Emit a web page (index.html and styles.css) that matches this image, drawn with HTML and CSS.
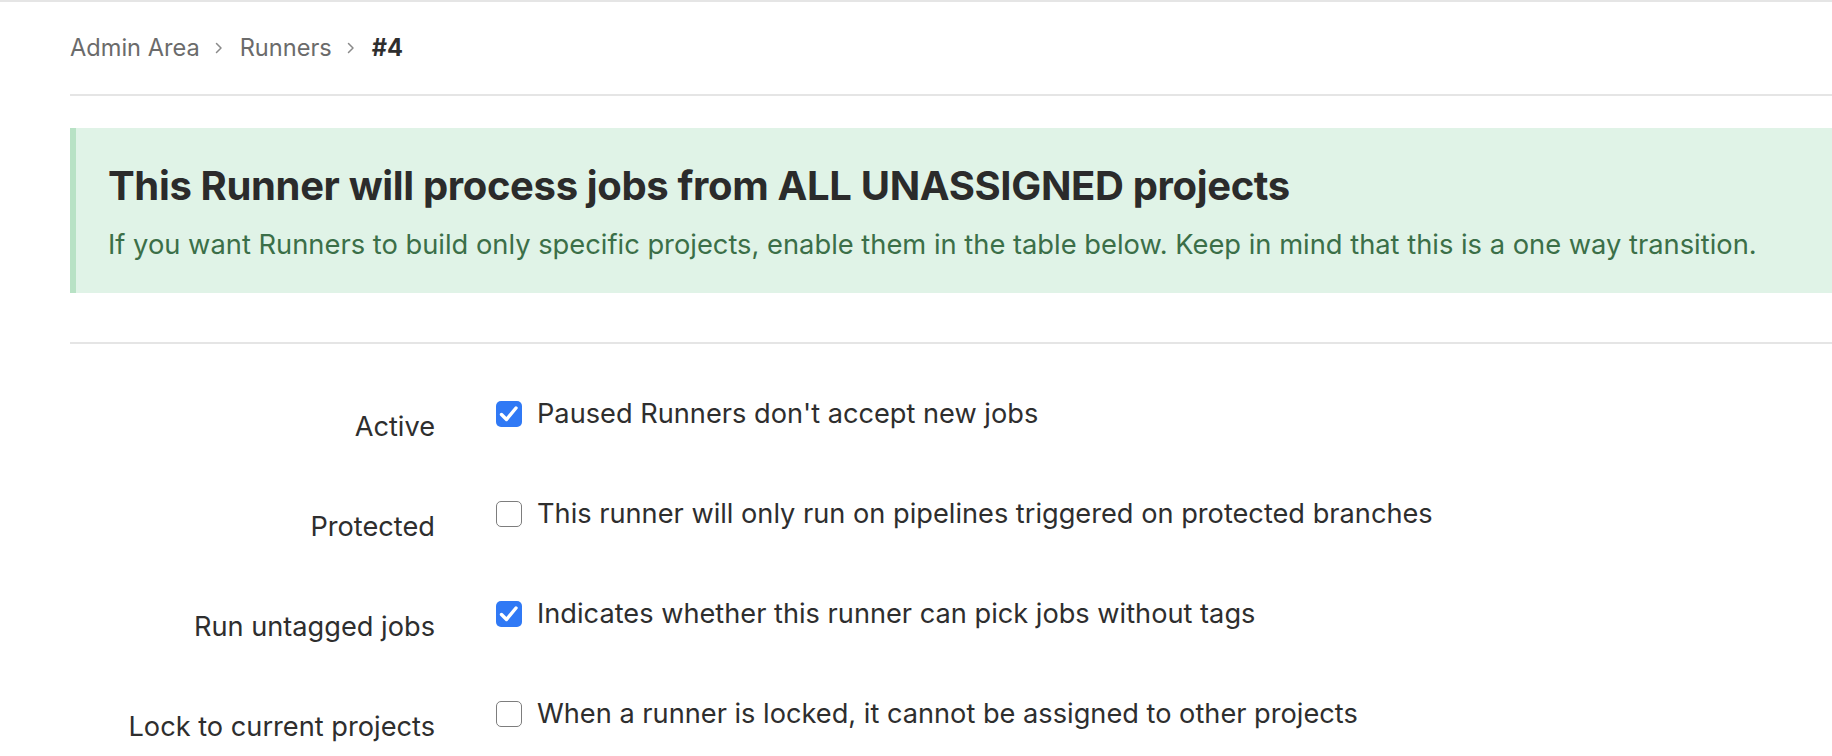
FILE: index.html
```html
<!DOCTYPE html>
<html>
<head>
<meta charset="utf-8">
<link rel="stylesheet" href="styles.css">
</head>
<body>
<div class="topbar"></div>
<main class="content">
  <nav class="breadcrumbs">
    <a class="crumb">Admin Area</a>
    <svg class="chev" width="8" height="12" viewBox="0 0 8 12"><path d="M1.5 1.5 L6 6 L1.5 10.5" fill="none" stroke="#8a8a8a" stroke-width="1.5" stroke-linecap="round" stroke-linejoin="round"/></svg>
    <a class="crumb">Runners</a>
    <svg class="chev" width="8" height="12" viewBox="0 0 8 12"><path d="M1.5 1.5 L6 6 L1.5 10.5" fill="none" stroke="#8a8a8a" stroke-width="1.5" stroke-linecap="round" stroke-linejoin="round"/></svg>
    <strong class="crumb current">#4</strong>
  </nav>

  <div class="alert">
    <h4 class="alert-title">This Runner will process jobs from ALL UNASSIGNED projects</h4>
    <p class="alert-text">If you want Runners to build only specific projects, enable them in the table below. Keep in mind that this is a one way transition.</p>
  </div>

  <hr class="divider">

  <form class="settings">
    <div class="row">
      <label class="row-label">Active</label>
      <div class="control">
        <span class="box checked"><svg width="26" height="26" viewBox="0 0 26 26"><path d="M5.5 13.5 L10.5 18.5 L20 7" fill="none" stroke="#fff" stroke-width="3.4" stroke-linecap="round" stroke-linejoin="round"/></svg></span>
        <span class="control-text">Paused Runners don't accept new jobs</span>
      </div>
    </div>
    <div class="row">
      <label class="row-label">Protected</label>
      <div class="control">
        <span class="box"></span>
        <span class="control-text">This runner will only run on pipelines triggered on protected branches</span>
      </div>
    </div>
    <div class="row">
      <label class="row-label">Run untagged jobs</label>
      <div class="control">
        <span class="box checked"><svg width="26" height="26" viewBox="0 0 26 26"><path d="M5.5 13.5 L10.5 18.5 L20 7" fill="none" stroke="#fff" stroke-width="3.4" stroke-linecap="round" stroke-linejoin="round"/></svg></span>
        <span class="control-text">Indicates whether this runner can pick jobs without tags</span>
      </div>
    </div>
    <div class="row">
      <label class="row-label">Lock to current projects</label>
      <div class="control">
        <span class="box"></span>
        <span class="control-text">When a runner is locked, it cannot be assigned to other projects</span>
      </div>
    </div>
  </form>
</main>
</body>
</html>
```
FILE: styles.css
```css
html, body {
  margin: 0;
  padding: 0;
  background: #fff;
  overflow: hidden;
}
body {
  font-family: Inter, "Noto Sans", sans-serif;
  color: #2e2e2e;
}
.topbar {
  height: 2px;
  background: #e5e5e5;
}
.content {
  padding-left: 70px;
}
.breadcrumbs {
  display: flex;
  align-items: center;
  padding: 30px 0 30px;
  border-bottom: 2px solid #e5e5e5;
  font-size: 23.6px;
  line-height: 32px;
}
.crumb {
  color: #6b6b6b;
}
.crumb.current {
  color: #2e2e2e;
  font-weight: 700;
}
.chev {
  margin: 0 17px 0 15px;
}
.alert {
  margin-top: 32px;
  height: 165px;
  box-sizing: border-box;
  border-left: 6px solid #b8e2c5;
  background: #e0f3e7;
  padding: 34px 0 0 32px;
}
.alert-title {
  margin: 0;
  font-size: 40px;
  line-height: 48px;
  font-weight: 700;
  color: #2b2b2b;
  letter-spacing: -0.35px;
}
.alert-text {
  margin: 19px 0 0;
  font-size: 27.3px;
  line-height: 32px;
  color: #3b6f48;
}
.divider {
  margin: 49px 0 0;
  border: 0;
  border-top: 2px solid #e5e5e5;
  height: 0;
}
.settings {
  padding-top: 40px;
}
.row {
  display: grid;
  grid-template-columns: 365px 1fr;
  column-gap: 61px;
  height: 100px;
}
.row-label {
  text-align: right;
  font-size: 27.2px;
  line-height: 32px;
  padding-top: 27px;
}
.control {
  display: flex;
  align-items: center;
  gap: 15px;
  padding-top: 14px;
  align-self: start;
  font-size: 27.2px;
  line-height: 32px;
}
.box {
  flex: none;
  width: 26px;
  height: 26px;
  box-sizing: border-box;
  border-radius: 5px;
  border: 1.5px solid #7d7d7d;
  background: #fff;
  display: flex;
}
.box.checked {
  border: 0;
  background: #3079f5;
}
```
